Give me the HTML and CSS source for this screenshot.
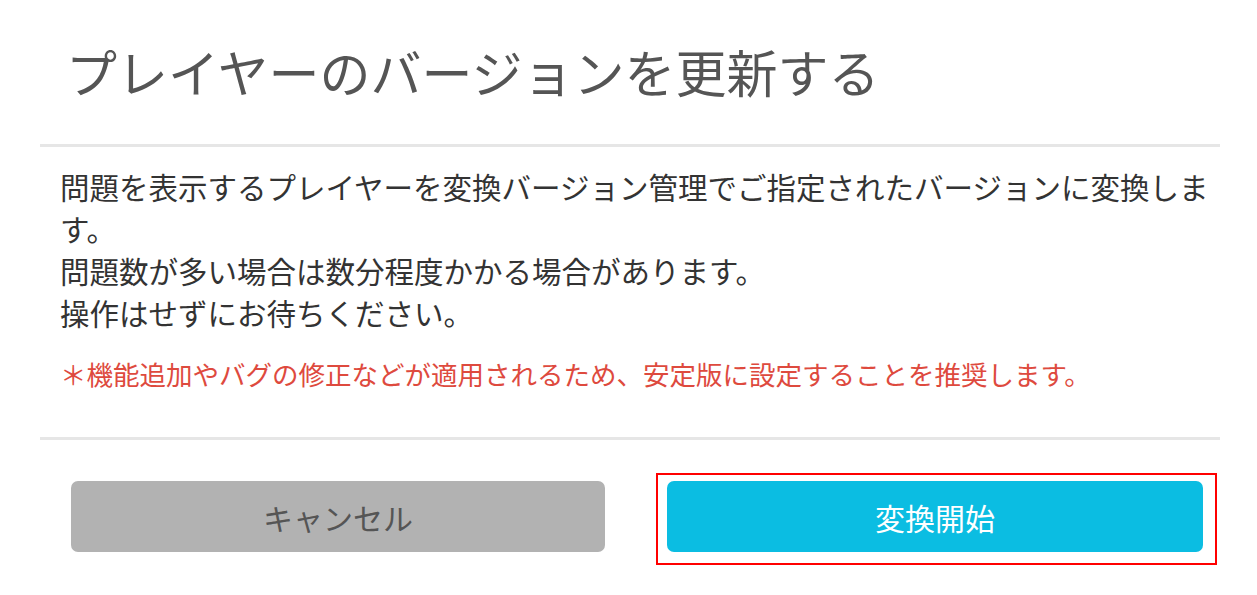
FILE: index.html
```html
<!DOCTYPE html>
<html lang="ja">
<head>
<meta charset="utf-8">
<title>プレイヤーのバージョンを更新する</title>
<link rel="stylesheet" href="styles.css">
</head>
<body>
<div class="dialog">
  <div class="dialog-header">
    <h1 class="dialog-title">プレイヤーのバージョンを更新する</h1>
  </div>
  <div class="dialog-body">
    <p class="body-text">問題を表示するプレイヤーを変換バージョン管理でご指定されたバージョンに変換します。<br>問題数が多い場合は数分程度かかる場合があります。<br>操作はせずにお待ちください。</p>
    <p class="note">＊機能追加やバグの修正などが適用されるため、安定版に設定することを推奨します。</p>
  </div>
  <div class="dialog-footer">
    <button class="btn btn-cancel" type="button">キャンセル</button>
    <div class="highlight">
      <button class="btn btn-primary" type="button">変換開始</button>
    </div>
  </div>
</div>
</body>
</html>
```

FILE: styles.css
```css
* { box-sizing: border-box; }
html, body {
  margin: 0;
  padding: 0;
  background: #fff;
  font-family: "Noto Sans CJK JP", "Noto Sans", sans-serif;
}
.dialog {
  width: 1257px;
  padding: 0 37px 0 40px;
}
.dialog-header {
  padding: 45px 0 47px 26px;
  border-bottom: 3px solid #e6e6e6;
}
.dialog-title {
  margin: 0;
  font-size: 51px;
  line-height: 52px;
  font-weight: 400;
  color: #555;
}
.dialog-body {
  padding: 18px 0 45px 20px;
  border-bottom: 3px solid #e6e6e6;
}
.body-text {
  margin: 0 -12px 0 0;
  font-size: 29.5px;
  line-height: 42px;
  color: #333;
}
.note {
  margin: 23px 0 0 0;
  font-size: 26.5px;
  line-height: 36px;
  color: #de4a3e;
}
.dialog-footer {
  display: flex;
  align-items: flex-start;
  gap: 51px;
  padding-left: 31px;
}
.btn {
  height: 71px;
  border: none;
  border-radius: 7px;
  font-family: inherit;
  font-size: 30px;
  cursor: pointer;
}
.btn-cancel {
  width: 534px;
  margin-top: 41px;
  background: #b2b2b2;
  color: #555;
}
.highlight {
  margin-top: 33px;
  border: 2px solid #ff0000;
  padding: 6px 12px 11px 9px;
}
.btn-primary {
  width: 536px;
  display: block;
  background: #0bbde2;
  color: #fff;
}
```
